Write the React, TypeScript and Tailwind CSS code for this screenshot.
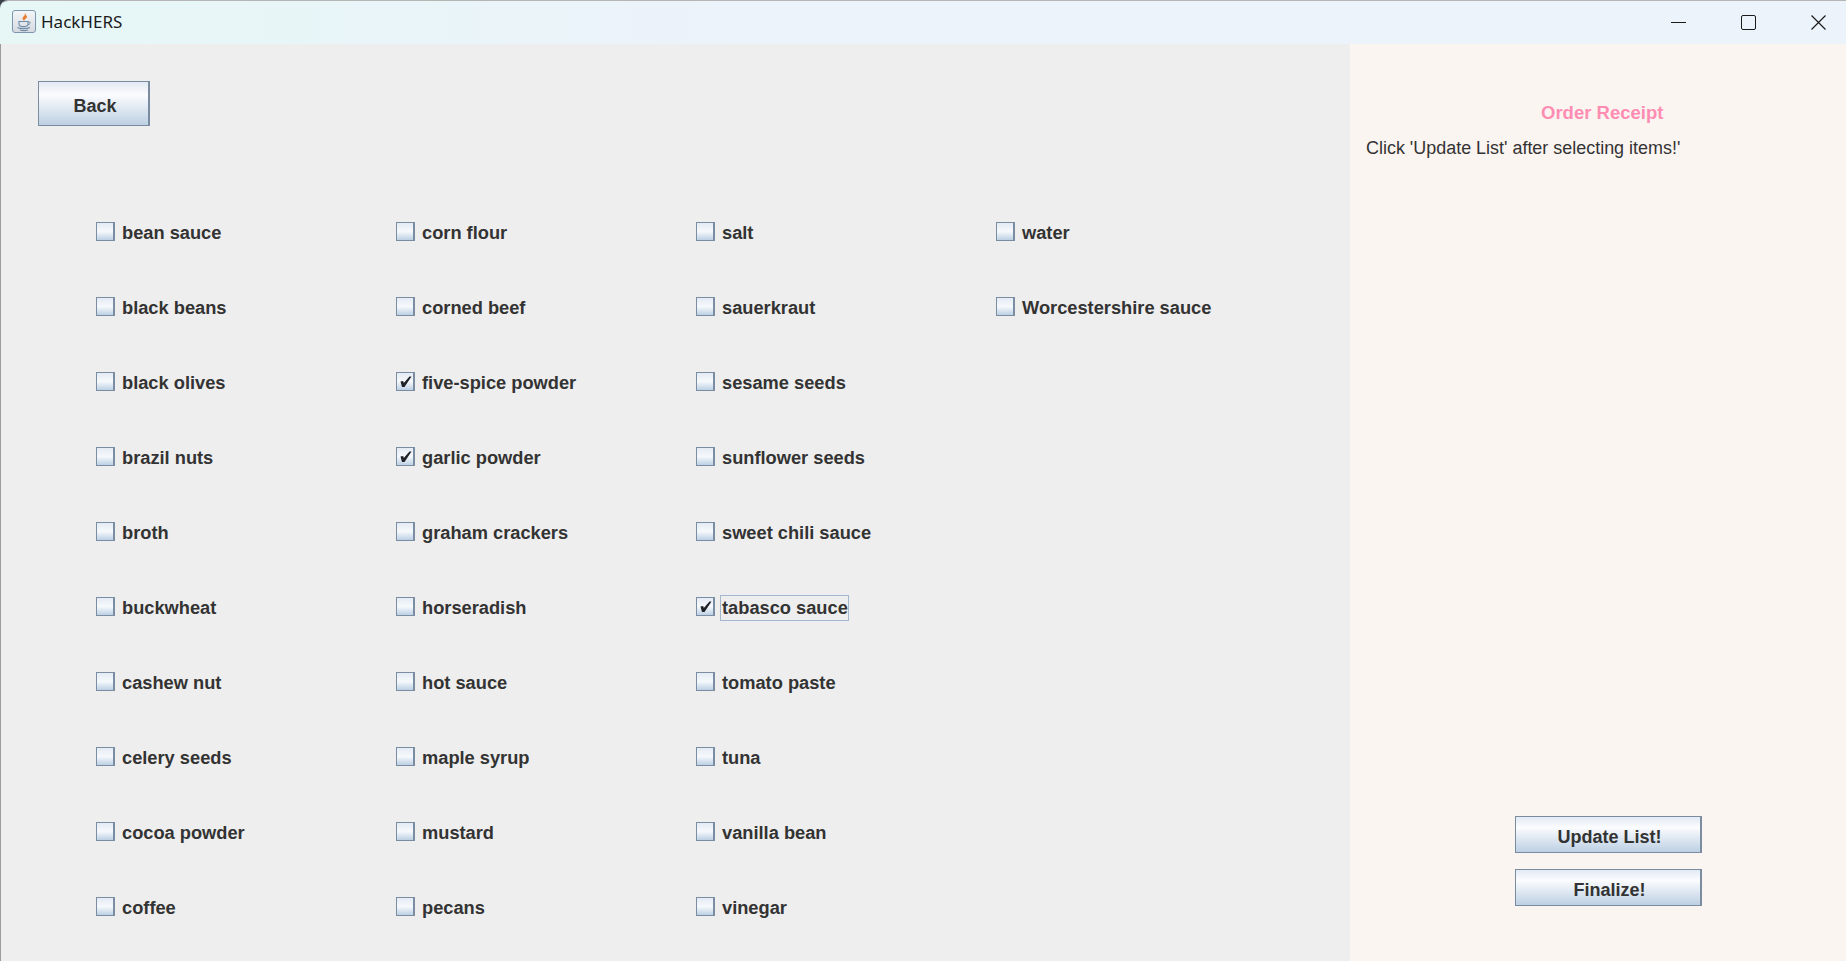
import React from 'react'

const columns = [
  ['bean sauce', 'black beans', 'black olives', 'brazil nuts', 'broth', 'buckwheat', 'cashew nut', 'celery seeds', 'cocoa powder', 'coffee'],
  ['corn flour', 'corned beef', 'five-spice powder', 'garlic powder', 'graham crackers', 'horseradish', 'hot sauce', 'maple syrup', 'mustard', 'pecans'],
  ['salt', 'sauerkraut', 'sesame seeds', 'sunflower seeds', 'sweet chili sauce', 'tabasco sauce', 'tomato paste', 'tuna', 'vanilla bean', 'vinegar'],
  ['water', 'Worcestershire sauce'],
]

const checked = ['five-spice powder', 'garlic powder', 'tabasco sauce']

const JavaIcon = () => (
  <div className="w-[24px] h-[23px] rounded-[3px] border border-[#7f97ad] bg-gradient-to-b from-[#f4f6f8] to-[#d5dbe2] flex items-center justify-center">
    <svg width="18" height="20" viewBox="0 0 18 20" fill="none">
      <path d="M10 1.500c1.500 2-2.500 3.200-2 5.300.2.900 1 1.500 1 1.500-.2-1.200 3.400-2.400 2.500-4.400" fill="#e8792b" stroke="#e8792b" strokeWidth="0.8" />
      <path d="M4 9.500h9v2.500c0 1.800-1.600 2.600-4.500 2.600S4 13.800 4 12z" stroke="#6f8ba6" strokeWidth="1.100" />
      <path d="M13 10h1.500c1.200 0 1.200 2.400-1.500 2.600" stroke="#6f8ba6" strokeWidth="1" />
      <path d="M2.500 15.500c3 1.500 9 1.500 12.500 0M5 18c2.500.7 6 .7 8 0" stroke="#6f8ba6" strokeWidth="1.100" />
    </svg>
  </div>
)

const Check = () => (
  <svg width="13" height="13" viewBox="0 0 13 13" className="block">
    <path d="M1.500 6.500 L4.200 6 L4.800 8 L10.500 1.500 L12.500 1.500 L5.500 12 L3 12 Z" fill="#1f2227" />
  </svg>
)

const CheckItem: React.FC<{ label: string }> = ({ label }) => {
  const on = checked.includes(label)
  const focused = label === 'tabasco sauce'
  return (
    <div className="h-[75px] flex items-center">
      <div className="w-[19px] h-[19px] mb-[2px] border border-[#7b8da3] border-r-2 bg-gradient-to-b from-[#e4ebf4] via-[#f6f9fc] to-[#bcd0e4] flex items-center justify-center">
        {on && <Check />}
      </div>
      <div className={`ml-[5px] h-[26px] pl-[1px] flex items-center border ${focused ? 'border-[#a3b8cf]' : 'border-transparent'}`}>
        <span className="text-[18.25px] font-bold text-[#333333]">{label}</span>
      </div>
    </div>
  )
}

const MetalButton: React.FC<{ label: string; className: string }> = ({ label, className }) => (
  <button className={`pt-[5px] pl-[3px] border border-r-2 border-[#7c8ca0] bg-gradient-to-b from-[#e3eaf4] via-[#fbfcfe] via-30% to-[#bdd0e3] text-[18px] font-bold text-[#333333] ${className}`}>
    {label}
  </button>
)

export default function App() {
  return (
    <div className="w-[1846px] h-[961px] overflow-hidden bg-[#3a4048] font-['Liberation_Sans',Arial,sans-serif]">
      <div className="h-full rounded-tl-[8px] overflow-hidden flex flex-col border-t border-[#b5b5b5]">
        {/* title bar */}
        <div className="h-[43px] shrink-0 flex items-center bg-gradient-to-r from-[#e6f7f6] via-[#ecf3fa] via-40% to-[#edf3fb]">
          <div className="ml-[12px] mb-[2px]">
            <JavaIcon />
          </div>
          <span className="ml-[5px] mb-[2px] text-[17px] text-[#1a1a1a] font-['Noto_Sans',sans-serif]">HackHERS</span>
          <div className="ml-auto mr-[20px] mb-[1px] flex items-center gap-[55px]">
            <div className="w-[15px] h-px bg-[#1a1a1a]" />
            <div className="w-[15px] h-[15px] rounded-[2px] border-[1.5px] border-[#1a1a1a]" />
            <svg width="15" height="15" viewBox="0 0 15 15" fill="none" stroke="#1a1a1a" strokeWidth="1.200">
              <path d="M0.500 0.500 L14.500 14.500 M14.500 0.500 L0.500 14.500" />
            </svg>
          </div>
        </div>

        <div className="flex-1 flex min-h-0">
          {/* ingredient list */}
          <div className="w-[1350px] bg-[#eeeeee] pl-[37px] pt-[37px] border-l border-[#9a9a9a]">
            <MetalButton label="Back" className="block w-[112px] h-[45px]" />
            <div className="mt-[69px] ml-[58px] flex">
              {columns.map((col, i) => (
                <div key={i} className="w-[300px] flex flex-col">
                  {col.map((item) => (
                    <CheckItem key={item} label={item} />
                  ))}
                </div>
              ))}
            </div>
          </div>

          {/* receipt */}
          <div className="flex-1 bg-[#fbf5f2] pl-[16px] pt-[58px] flex flex-col">
            <div className="pl-[175px] text-[18.5px] font-bold text-[#ff8db3] leading-[22px]">Order Receipt</div>
            <div className="mt-[13px] text-[17.95px] text-[#333333] leading-[22px]">Click 'Update List' after selecting items!'</div>
            <div className="mt-[657px] ml-[149px] flex flex-col gap-[16px]">
              <MetalButton label="Update List!" className="w-[187px] h-[37px]" />
              <MetalButton label="Finalize!" className="w-[187px] h-[37px]" />
            </div>
          </div>
        </div>
      </div>
    </div>
  )
}
